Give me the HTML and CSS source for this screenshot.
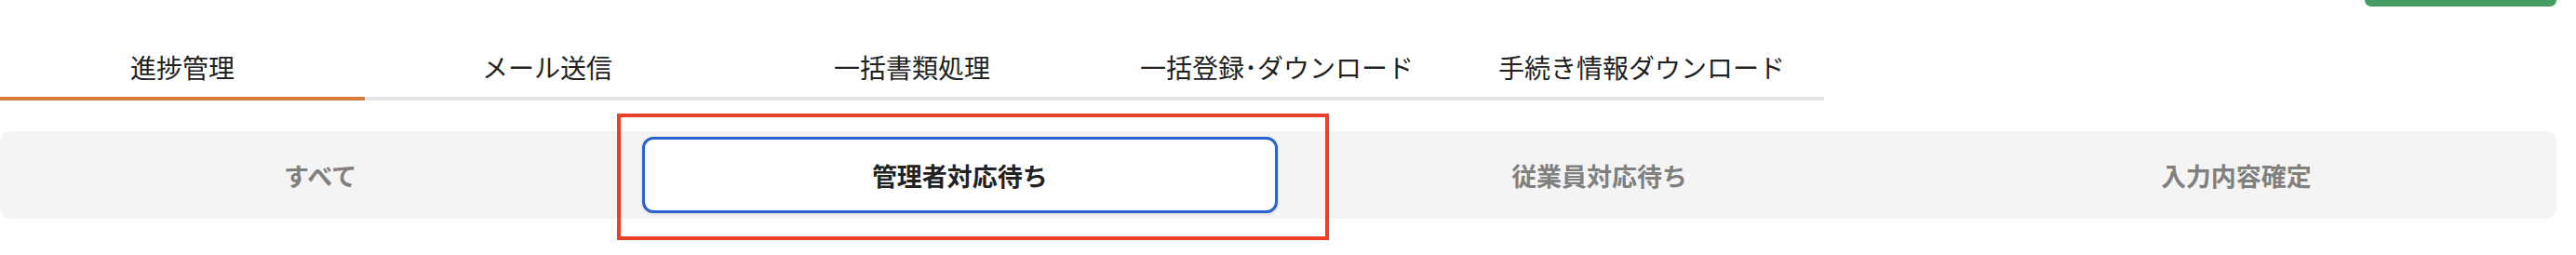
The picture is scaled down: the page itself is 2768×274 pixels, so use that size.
FILE: index.html
```html
<!DOCTYPE html>
<html lang="ja">
<head>
<meta charset="utf-8">
<title>進捗管理</title>
<link rel="stylesheet" href="styles.css">
</head>
<body>
<div class="page">
  <div class="actions">
    <button class="green-btn" type="button" aria-label="action"></button>
  </div>
  <nav class="tabs">
    <div class="tab active">進捗管理</div>
    <div class="tab">メール送信</div>
    <div class="tab">一括書類処理</div>
    <div class="tab">一括登録･ダウンロード</div>
    <div class="tab">手続き情報ダウンロード</div>
  </nav>
  <div class="segments">
    <div class="seg">すべて</div>
    <div class="seg selected">管理者対応待ち</div>
    <div class="seg">従業員対応待ち</div>
    <div class="seg">入力内容確定</div>
    <div class="highlight"></div>
  </div>
</div>
</body>
</html>
```

FILE: styles.css
```css
* { box-sizing: border-box; }
html, body { margin: 0; padding: 0; background: #ffffff; }
body {
  font-family: "Noto Sans CJK JP", "Noto Sans", sans-serif;
  color: #222222;
}
.page {
  width: 2768px;
  height: 274px;
  padding-right: 21px;
  padding-bottom: 39px;
}
.actions {
  display: flex;
  justify-content: flex-end;
  height: 7px;
}
.green-btn {
  width: 206px;
  height: 7px;
  border: none;
  padding: 0;
  background: #459c63;
  border-radius: 0 0 8px 8px;
}
.tabs {
  display: flex;
  width: 1960px;
  margin-top: 33px;
  border-bottom: 4px solid #e6e6ea;
}
.tab {
  flex: 1 1 0;
  height: 64px;
  display: flex;
  align-items: center;
  justify-content: center;
  font-size: 28px;
  font-weight: 400;
  color: #222222;
  position: relative;
}
.tab.active::after {
  content: "";
  position: absolute;
  left: 0;
  right: 0;
  bottom: -4px;
  height: 4px;
  background: #d97a3b;
}
.segments {
  position: relative;
  display: flex;
  gap: 8px;
  margin-top: 33px;
  height: 94px;
  padding: 6px;
  background: #f4f4f4;
  border-radius: 12px;
}
.seg {
  flex: 1 1 0;
  display: flex;
  align-items: center;
  justify-content: center;
  font-size: 27px;
  font-weight: 700;
  color: #808080;
  border-radius: 12px;
}
.seg.selected {
  background: #ffffff;
  border: 3px solid #2b63c8;
  color: #222222;
  box-shadow: 0 1px 3px rgba(0, 0, 0, 0.15);
}
.highlight {
  position: absolute;
  left: 663px;
  top: -19px;
  width: 765px;
  height: 136px;
  border: 4px solid #e8412b;
  pointer-events: none;
}
```
